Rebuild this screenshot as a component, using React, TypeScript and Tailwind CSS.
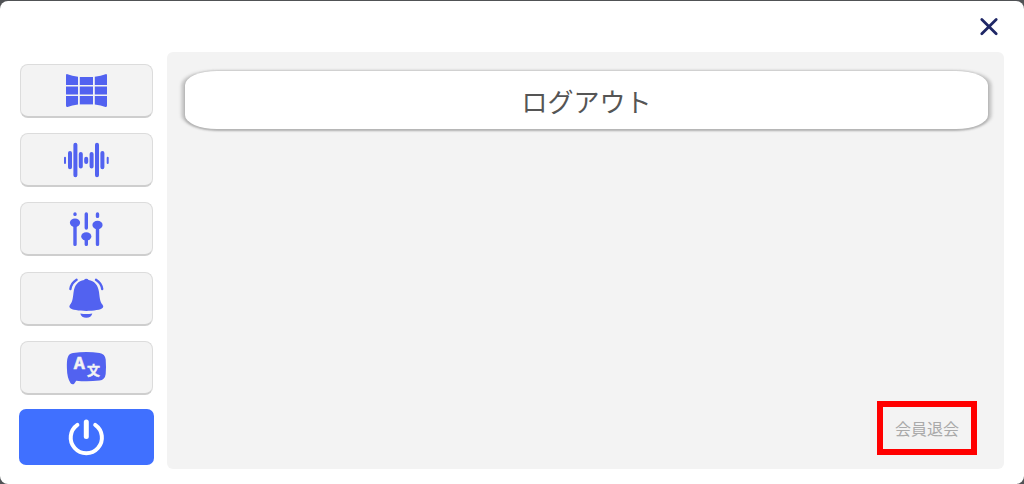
import type { ReactNode } from 'react';

function Icon({ children }: { children: ReactNode }) {
  return (
    <svg viewBox="0 0 49 48" className="h-12 w-[49px] shrink-0" fill="currentColor" stroke="none" aria-hidden="true">
      {children}
    </svg>
  );
}

function ScreenIcon() {
  return (
    <Icon>
      <path d="M5.5 7.2Q10 9 16 9.8V18H4V8.5Q4 6.8 5.5 7.2Z" />
      <path d="M17.8 10H31V18H17.8Z" />
      <path d="M43.5 7.2Q39 9 32.8 9.8V18H45V8.5Q45 6.8 43.5 7.2Z" />
      <path d="M4 19.4H16V27.6H4ZM17.8 19.4H31V27.6H17.8ZM32.8 19.4H45V27.6H32.8Z" />
      <path d="M4 29H16V37.4Q10 38.2 5.5 39.9Q4 40.3 4 38.6Z" />
      <path d="M17.8 29H31V37.4H17.8Z" />
      <path d="M45 29H32.8V37.4Q39 38.2 43.5 39.9Q45 40.3 45 38.6Z" />
    </Icon>
  );
}

function WaveIcon() {
  return (
    <Icon>
      <g stroke="currentColor" strokeLinecap="round">
        <path strokeWidth="2" d="M3 21.8V27M45.7 21.8V27" />
        <path strokeWidth="4" d="M8 17V31.2M13.4 8.7V39.3M18.8 18V30.6M24.2 22.7V26M29.6 18V30.6M35 8.7V39.3M40.4 17V31.2" />
      </g>
    </Icon>
  );
}

function SlidersIcon() {
  return (
    <Icon>
      <g stroke="currentColor" strokeLinecap="round" strokeWidth="3.4">
        <path d="M13 8.9V9.4M13 18V39.4M24.3 8.9V23M24.3 31V39.4M35.5 8.9V11.4M35.5 20V39.4" />
      </g>
      <ellipse cx="13" cy="17.8" rx="5.1" ry="4.2" />
      <ellipse cx="24.3" cy="31.4" rx="5.1" ry="4.2" />
      <ellipse cx="35.5" cy="20" rx="5.1" ry="4.2" />
    </Icon>
  );
}

function BellIcon() {
  return (
    <Icon>
      <path d="M24.3 4.8Q26 4.8 26.5 6C32.4 6.8 36 11 37 18C37.8 24 38 28 40.4 30.5Q42 32.2 40.8 33.8C37 38 11.6 38 7.8 33.8Q6.6 32.2 8.2 30.5C10.6 28 10.8 24 11.6 18C12.6 11 16.2 6.8 22.1 6Q22.6 4.8 24.3 4.8Z" />
      <path d="M18.3 39.4Q24.3 40.6 30.3 39.4C29.8 42.2 27.4 43.7 24.3 43.7S18.8 42.2 18.3 39.4Z" />
      <path
        d="M14.6 5.8C11 8 9 11 8.4 15M34 5.8C37.6 8 39.6 11 40.2 15"
        fill="none"
        stroke="currentColor"
        strokeWidth="2.4"
        strokeLinecap="round"
      />
    </Icon>
  );
}

function LanguageIcon() {
  return (
    <Icon>
      <path d="M11 10C20 8.8 29 8.8 37.5 10Q43 10.8 43.7 16.5Q44.3 24 43.7 31Q43 36.8 37.5 37.6Q25 39 14.2 37.8L12.4 40.4Q10.5 42.4 8.6 40.2Q5 35 4.9 25C4.8 15 5.5 11 11 10Z" />
      <text x="11.8" y="25.5" fontSize="16" fontWeight="700" fontFamily="'Noto Sans', sans-serif" fill="#f3f3f3" stroke="#f3f3f3" strokeWidth="0.5">
        A
      </text>
      <text x="25" y="31.5" fontSize="13" fontWeight="700" fontFamily="'Noto Sans CJK JP', sans-serif" fill="#f3f3f3" stroke="#f3f3f3" strokeWidth="0.4">
        文
      </text>
    </Icon>
  );
}

function PowerIcon() {
  return (
    <Icon>
      <g fill="none" stroke="currentColor" strokeLinecap="round">
        <path strokeWidth="4" d="M15.4 11.8A15.6 15.6 0 1 0 33.2 11.8" />
        <path strokeWidth="5" d="M24.3 9V23.4" />
      </g>
    </Icon>
  );
}

const tabs = [
  { label: '画面', icon: <ScreenIcon /> },
  { label: '音声', icon: <WaveIcon /> },
  { label: '調整', icon: <SlidersIcon /> },
  { label: '通知', icon: <BellIcon /> },
  { label: '言語', icon: <LanguageIcon /> },
  { label: 'アカウント', icon: <PowerIcon />, active: true },
];

export default function App() {
  return (
    <div className="flex min-h-screen flex-col bg-[#505255] pt-px font-['Noto_Sans_CJK_JP',sans-serif]">
      <main className="flex flex-1 flex-col rounded-lg bg-white pb-[15px]">
        <header className="flex h-[51px] items-center justify-end pr-6">
          <button type="button" aria-label="閉じる" className="flex size-[22px] items-center justify-center text-[#1f2766]">
            <svg viewBox="0 0 22 22" className="size-[22px]" stroke="currentColor" strokeWidth="2.8" strokeLinecap="round" aria-hidden="true">
              <path d="M3.8 3.4L18.2 17.8M18.2 3.4L3.8 17.8" />
            </svg>
          </button>
        </header>

        <div className="flex flex-1 gap-[14px] px-5">
          <nav className="flex w-[133px] shrink-0 flex-col justify-between gap-2 pt-3 pb-[5px]">
            {tabs.map((tab) => (
              <button
                key={tab.label}
                type="button"
                aria-label={tab.label}
                aria-current={tab.active ? 'page' : undefined}
                className={
                  tab.active
                    ? 'flex h-[54px] items-center justify-center rounded-md bg-[#4070ff] text-white ring-1 ring-[#4070ff]'
                    : 'flex h-[54px] items-center justify-center rounded-lg border border-b-2 border-[#dcdcdc] border-b-[#cecece] bg-[#f3f3f3] text-[#5262f0]'
                }
              >
                {tab.icon}
              </button>
            ))}
          </nav>

          <section className="flex flex-1 flex-col justify-between rounded-md bg-[#f3f3f3] pt-[19px] pr-4 pb-[14px] pl-[18px]">
            <button
              type="button"
              className="h-[58px] w-full rounded-[32px/14px] bg-white text-[26px] text-[#555555] shadow-[0_1px_2px_1px_#b4b4b4,4px_0_3px_#cccccc,-4px_0_3px_#cccccc]"
            >
              ログアウト
            </button>
            <div className="flex justify-end pr-[11px]">
              <button type="button" className="h-[54px] w-[100px] border-[6px] border-[#ff0000] text-base whitespace-nowrap text-[#aaaaaa]">
                会員退会
              </button>
            </div>
          </section>
        </div>
      </main>
    </div>
  );
}
